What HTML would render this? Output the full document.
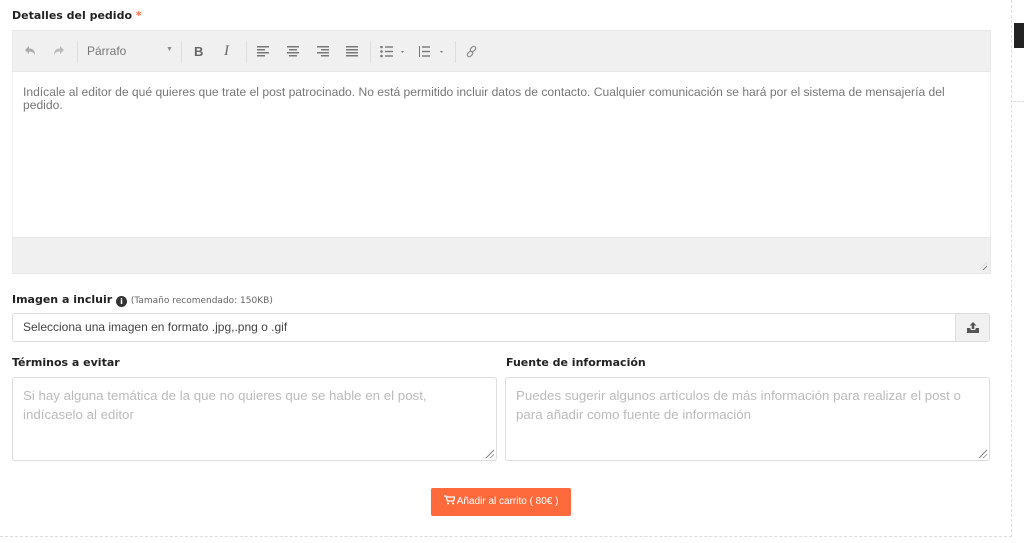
<!DOCTYPE html>
<html><head><meta charset="utf-8"><style>
*{box-sizing:border-box;margin:0;padding:0}
body{width:1024px;height:543px;background:#fff;position:relative;overflow:hidden;font-family:"Liberation Sans",sans-serif;color:#555}
.abs{position:absolute}
.lbl{font-family:"DejaVu Sans","Liberation Sans",sans-serif;font-weight:bold;font-size:11px;color:#222}
.tb{left:12px;top:30px;width:979px;height:42px;background:#f0f0f0;border:1px solid #e8e8e8}
.ico{position:absolute;top:13px;color:#8a8a8a;font-size:13px}
.sep{position:absolute;top:10px;width:1px;height:22px;background:#ddd}
.ta{border:1px solid #ddd;border-radius:3px;background:#fff;font-size:13.3px;color:#bbb;line-height:19px;padding:8px 10px}
.grip{position:absolute;right:2px;bottom:2px;width:10px;height:10px;background:repeating-linear-gradient(135deg,transparent 0 2px,#888 2px 3px);clip-path:polygon(100% 0,100% 100%,0 100%)}
</style></head><body>
<div class="abs lbl" style="left:12px;top:9px">Detalles del pedido <span style="color:#ff6a3d">*</span></div>
<div class="abs tb">
 <svg class="abs" style="left:11px;top:14px" width="12" height="12" viewBox="0 0 12 12"><path d="M1 5l4-4v2.5c4 0 6 2 6 7-1-3-3-4-6-4V9z" fill="#aaa"/></svg>
 <svg class="abs" style="left:40px;top:14px" width="12" height="12" viewBox="0 0 12 12"><path d="M11 5L7 1v2.5c-4 0-6 2-6 7 1-3 3-4 6-4V9z" fill="#bbb"/></svg>
 <div class="sep" style="left:64px"></div>
 <div class="ico" style="left:74px;top:13px;font-size:12px;color:#777">Párrafo</div>
 <div class="ico" style="left:153px;top:15px;font-size:7px">▼</div>
 <div class="sep" style="left:168px"></div>
 <div class="ico" style="left:181px;font-weight:bold;color:#666">B</div>
 <div class="ico" style="left:211px;font-style:italic;font-family:'Liberation Serif',serif;font-size:15px;top:12px;color:#666">I</div>
 <div class="sep" style="left:233px"></div>
 <svg class="abs" style="left:244px;top:15px" width="102" height="11" viewBox="0 0 102 11" fill="#777">
  <rect x="0" y="0" width="12" height="1.5"/><rect x="0" y="3" width="8" height="1.5"/><rect x="0" y="6" width="12" height="1.5"/><rect x="0" y="9" width="8" height="1.5"/>
  <rect x="30" y="0" width="12" height="1.5"/><rect x="32" y="3" width="8" height="1.5"/><rect x="30" y="6" width="12" height="1.5"/><rect x="32" y="9" width="8" height="1.5"/>
  <rect x="60" y="0" width="12" height="1.5"/><rect x="64" y="3" width="8" height="1.5"/><rect x="60" y="6" width="12" height="1.5"/><rect x="64" y="9" width="8" height="1.5"/>
  <rect x="89" y="0" width="12" height="1.5"/><rect x="89" y="3" width="12" height="1.5"/><rect x="89" y="6" width="12" height="1.5"/><rect x="89" y="9" width="12" height="1.5"/>
 </svg>
 <div class="sep" style="left:357px"></div>
 <svg class="abs" style="left:367px;top:15px" width="80" height="12" viewBox="0 0 80 12" fill="#777">
  <circle cx="1.5" cy="1" r="1.3"/><circle cx="1.5" cy="5.5" r="1.3"/><circle cx="1.5" cy="10" r="1.3"/><rect x="5" y="0.3" width="8" height="1.4"/><rect x="5" y="4.8" width="8" height="1.4"/><rect x="5" y="9.3" width="8" height="1.4"/>
  <path d="M21 5h3l-1.5 2z"/>
  <rect x="39" y="0" width="1" height="11"/><rect x="42" y="0.3" width="8" height="1.4"/><rect x="42" y="4.8" width="8" height="1.4"/><rect x="42" y="9.3" width="8" height="1.4"/>
  <path d="M60 5h3l-1.5 2z"/>
 </svg>
 <div class="sep" style="left:442px"></div>
 <svg class="abs" style="left:452px;top:14px" width="13" height="13" viewBox="0 0 13 13" fill="none" stroke="#888" stroke-width="1.2"><rect x="6" y="1" width="4" height="6" rx="2" transform="rotate(45 8 4)"/><rect x="3" y="6" width="4" height="6" rx="2" transform="rotate(45 5 9)"/></svg>
</div>
<div class="abs" style="left:12px;top:72px;width:979px;height:166px;border-left:1px solid #eee;border-right:1px solid #eee;background:#fff"></div>
<div class="abs" style="left:23px;top:86px;width:950px;font-size:12.1px;line-height:13px;color:#777">Indícale al editor de qué quieres que trate el post patrocinado. No está permitido incluir datos de contacto. Cualquier comunicación se hará por el sistema de mensajería del pedido.</div>
<div class="abs" style="left:12px;top:237px;width:979px;height:37px;background:#f0f0f0;border:1px solid #e8e8e8"><div class="grip" style="width:8px;height:8px;right:3px;bottom:3px"></div></div>

<div class="abs lbl" style="left:12px;top:293px">Imagen a incluir <span style="display:inline-block;width:11px;height:11px;border-radius:50%;background:#333;color:#fff;font-size:8px;text-align:center;line-height:11px;vertical-align:-1px">i</span> <span style="font-weight:normal;font-size:9px;color:#666">(Tamaño recomendado: 150KB)</span></div>
<div class="abs" style="left:12px;top:313px;width:978px;height:29px;border:1px solid #ddd;border-radius:3px;background:#fff"></div>
<div class="abs" style="left:23px;top:320px;font-size:12px;color:#444">Selecciona una imagen en formato .jpg,.png o .gif</div>
<div class="abs" style="left:955px;top:314px;width:34px;height:27px;background:#f1f1f1;border-left:1px solid #ddd"><svg class="abs" style="left:10px;top:7px" width="14" height="13" viewBox="0 0 14 13"><path d="M1 7v5h12V7h-3l-1 2H5L4 7z" fill="#555"/><path d="M7 1l3.5 3.5H8.3V8H5.7V4.5H3.5z" fill="#555"/></svg></div>

<div class="abs lbl" style="left:12px;top:356px">Términos a evitar</div>
<div class="abs lbl" style="left:506px;top:356px">Fuente de información</div>
<div class="abs ta" style="left:12px;top:377px;width:485px;height:84px">Si hay alguna temática de la que no quieres que se hable en el post, indícaselo al editor<div class="grip"></div></div>
<div class="abs ta" style="left:505px;top:377px;width:485px;height:84px">Puedes sugerir algunos artículos de más información para realizar el post o para añadir como fuente de información<div class="grip"></div></div>

<div class="abs" style="left:431px;top:488px;width:140px;height:28px;background:#ff6a3d;border-radius:2px;color:#fff;font-size:10px;line-height:28px;text-align:center"><svg width="11" height="10" viewBox="0 0 11 10" style="vertical-align:-1px"><path d="M0 1h2l1.5 5h6L11 2H3" fill="none" stroke="#fff" stroke-width="1.3"/><circle cx="4" cy="8.5" r="1" fill="#fff"/><circle cx="9" cy="8.5" r="1" fill="#fff"/></svg> Añadir al carrito ( 80€ )</div>

<div class="abs" style="left:1011px;top:0;width:0;height:537px;border-left:1px dashed #ddd"></div>
<div class="abs" style="left:0;top:536px;width:1012px;height:0;border-top:1px dashed #ddd"></div>
<div class="abs" style="left:1014px;top:23px;width:10px;height:25px;background:#222"></div>
<div class="abs" style="left:1013px;top:101px;width:11px;height:0;border-top:1px dashed #ddd"></div>
</body></html>
